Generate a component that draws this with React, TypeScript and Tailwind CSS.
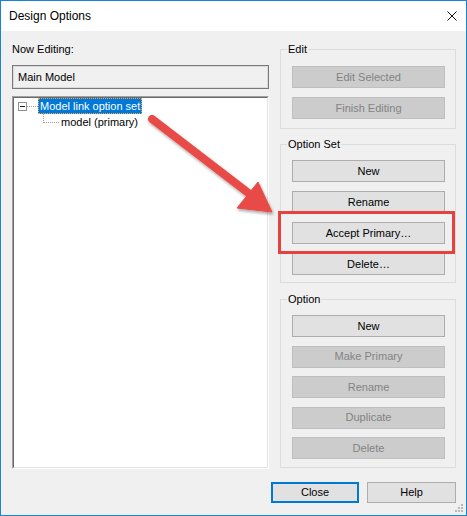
import React from 'react';

type Btn = { label: string; disabled?: boolean };

const EDIT_BUTTONS: Btn[] = [
  { label: 'Edit Selected', disabled: true },
  { label: 'Finish Editing', disabled: true },
];

const OPTION_SET_BUTTONS: Btn[] = [
  { label: 'New' },
  { label: 'Rename' },
  { label: 'Accept Primary...' },
  { label: 'Delete...' },
];

const OPTION_BUTTONS: Btn[] = [
  { label: 'New' },
  { label: 'Make Primary', disabled: true },
  { label: 'Rename', disabled: true },
  { label: 'Duplicate', disabled: true },
  { label: 'Delete', disabled: true },
];

function WinButton({ label, disabled }: Btn) {
  return (
    <button
      type="button"
      disabled={disabled}
      className={
        disabled
          ? 'h-[22px] w-[153px] border border-[#bfbfbf] bg-[#cccccc] text-[11px] leading-[13px] text-[#838383]'
          : 'h-[22px] w-[153px] border border-[#adadad] bg-[#e1e1e1] text-[11px] leading-[13px] text-black'
      }
    >
      {label.replace('...', '\u2026')}
    </button>
  );
}

function GroupBox({
  title,
  buttons,
  className,
  gap,
}: {
  title: string;
  buttons: Btn[];
  className: string;
  gap: string;
}) {
  return (
    <div className={`relative border border-[#dcdcdc] pl-[11px] pr-[10px] ${className}`}>
      <span className="absolute left-[6px] top-[-7px] bg-[#f0f0f0] px-[1px] text-[11px] leading-[13px] text-black">
        {title}
      </span>
      <div className={`flex flex-col ${gap}`}>
        {buttons.map((b) => (
          <WinButton key={b.label} {...b} />
        ))}
      </div>
    </div>
  );
}

function Tree() {
  return (
    <div className="mt-[7px] h-[373px] border border-t-[#a0a0a0] border-l-[#a0a0a0] border-r-white border-b-white">
      <div className="h-full border border-t-[#696969] border-l-[#696969] border-r-[#e3e3e3] border-b-[#e3e3e3] bg-white">
        {/* root node */}
        <div className="flex h-[16px] items-center pl-[4px]">
          <div className="flex h-[9px] w-[9px] items-center justify-center border border-[#919191] bg-white">
            <div className="h-px w-[5px] bg-[#1c1c1c]" />
          </div>
          <div className="w-[11px] border-t border-dotted border-[#a0a0a0]" />
          <div className="flex h-[16px] items-center border border-dotted border-[#f5a64b] bg-[#0078d7] px-[1px] text-[11px] leading-[13px] text-white">
            Model link option set
          </div>
        </div>
        {/* child node */}
        <div className="flex h-[16px] items-start pl-[29px]">
          <div className="h-[9px] w-[16px] border-b border-l border-dotted border-[#a0a0a0]" />
          <span className="ml-[2px] mt-[2px] text-[11px] leading-[13px] text-black">model (primary)</span>
        </div>
      </div>
    </div>
  );
}

function Arrow() {
  return (
    <svg
      className="pointer-events-none absolute left-0 top-0"
      width="467"
      height="516"
      viewBox="0 0 467 516"
    >
      <defs>
        <filter id="shade" x="-20%" y="-20%" width="140%" height="140%">
          <feDropShadow dx="1" dy="2" stdDeviation="1.5" floodColor="#000" floodOpacity="0.35" />
        </filter>
      </defs>
      <g filter="url(#shade)" fill="#e84c47" stroke="#e84c47">
        <line x1="151" y1="118" x2="250" y2="194" strokeWidth="8" strokeLinecap="round" />
        <polygon points="271,211 236,207 257,181" strokeWidth="1" strokeLinejoin="round" />
      </g>
      <rect x="278.5" y="211.5" width="174" height="40" fill="none" stroke="#e5423f" strokeWidth="3" />
    </svg>
  );
}

export default function App() {
  return (
    <div
      className="relative flex h-[516px] w-[467px] flex-col border border-[#1883d7] bg-[#f0f0f0] text-black"
      style={{ fontFamily: '"Liberation Sans", Arial, sans-serif' }}
    >
      {/* title bar */}
      <div className="flex h-[30px] shrink-0 items-center justify-between bg-white pl-[8px] pr-[9px]">
        <span className="text-[12px] text-black">Design Options</span>
        <svg width="10" height="10" viewBox="0 0 10 10">
          <path d="M0.5 0.5 L9.5 9.5 M9.5 0.5 L0.5 9.5" stroke="#111" strokeWidth="1" />
        </svg>
      </div>

      <div className="flex flex-1 flex-col pt-[12px]">
        <div className="flex">
          {/* left column */}
          <div className="ml-[11px] flex w-[257px] flex-col">
            <span className="h-[13px] text-[11px] leading-[13px]">Now Editing:</span>
            <div className="mt-[9px] h-[24px] border border-[#7a7a7a]">
              <div className="flex h-full items-center border border-[#dadada] pl-[4px] text-[11px] leading-[13px]">
                Main Model
              </div>
            </div>
            <Tree />
          </div>

          {/* right column */}
          <div className="ml-[11px] flex w-[176px] flex-col">
            <GroupBox title="Edit" buttons={EDIT_BUTTONS} className="mt-[6px] pt-[16px] pb-[9px]" gap="gap-[9px]" />
            <GroupBox title="Option Set" buttons={OPTION_SET_BUTTONS} className="mt-[15px] pt-[15px] pb-[7px]" gap="gap-[9px]" />
            <GroupBox title="Option" buttons={OPTION_BUTTONS} className="mt-[16px] pt-[15px] pb-[8px]" gap="gap-[8.5px]" />
          </div>
        </div>

        {/* dialog buttons */}
        <div className="mt-[13px] flex justify-end gap-[8px] pr-[10px]">
          <button
            type="button"
            className="h-[21px] w-[88px] border-2 border-[#0078d7] bg-[#e1e1e1] text-[11px] leading-[13px]"
          >
            Close
          </button>
          <button
            type="button"
            className="h-[21px] w-[89px] border border-[#adadad] bg-[#e1e1e1] text-[11px] leading-[13px]"
          >
            Help
          </button>
        </div>
      </div>

      {/* size grip */}
      <svg className="absolute bottom-[2px] right-[2px]" width="9" height="9" viewBox="0 0 9 9">
        <g fill="#b8b8b8">
          <rect x="6" y="0" width="2" height="2" />
          <rect x="3" y="3" width="2" height="2" />
          <rect x="6" y="3" width="2" height="2" />
          <rect x="0" y="6" width="2" height="2" />
          <rect x="3" y="6" width="2" height="2" />
          <rect x="6" y="6" width="2" height="2" />
        </g>
      </svg>

      <Arrow />
    </div>
  );
}
